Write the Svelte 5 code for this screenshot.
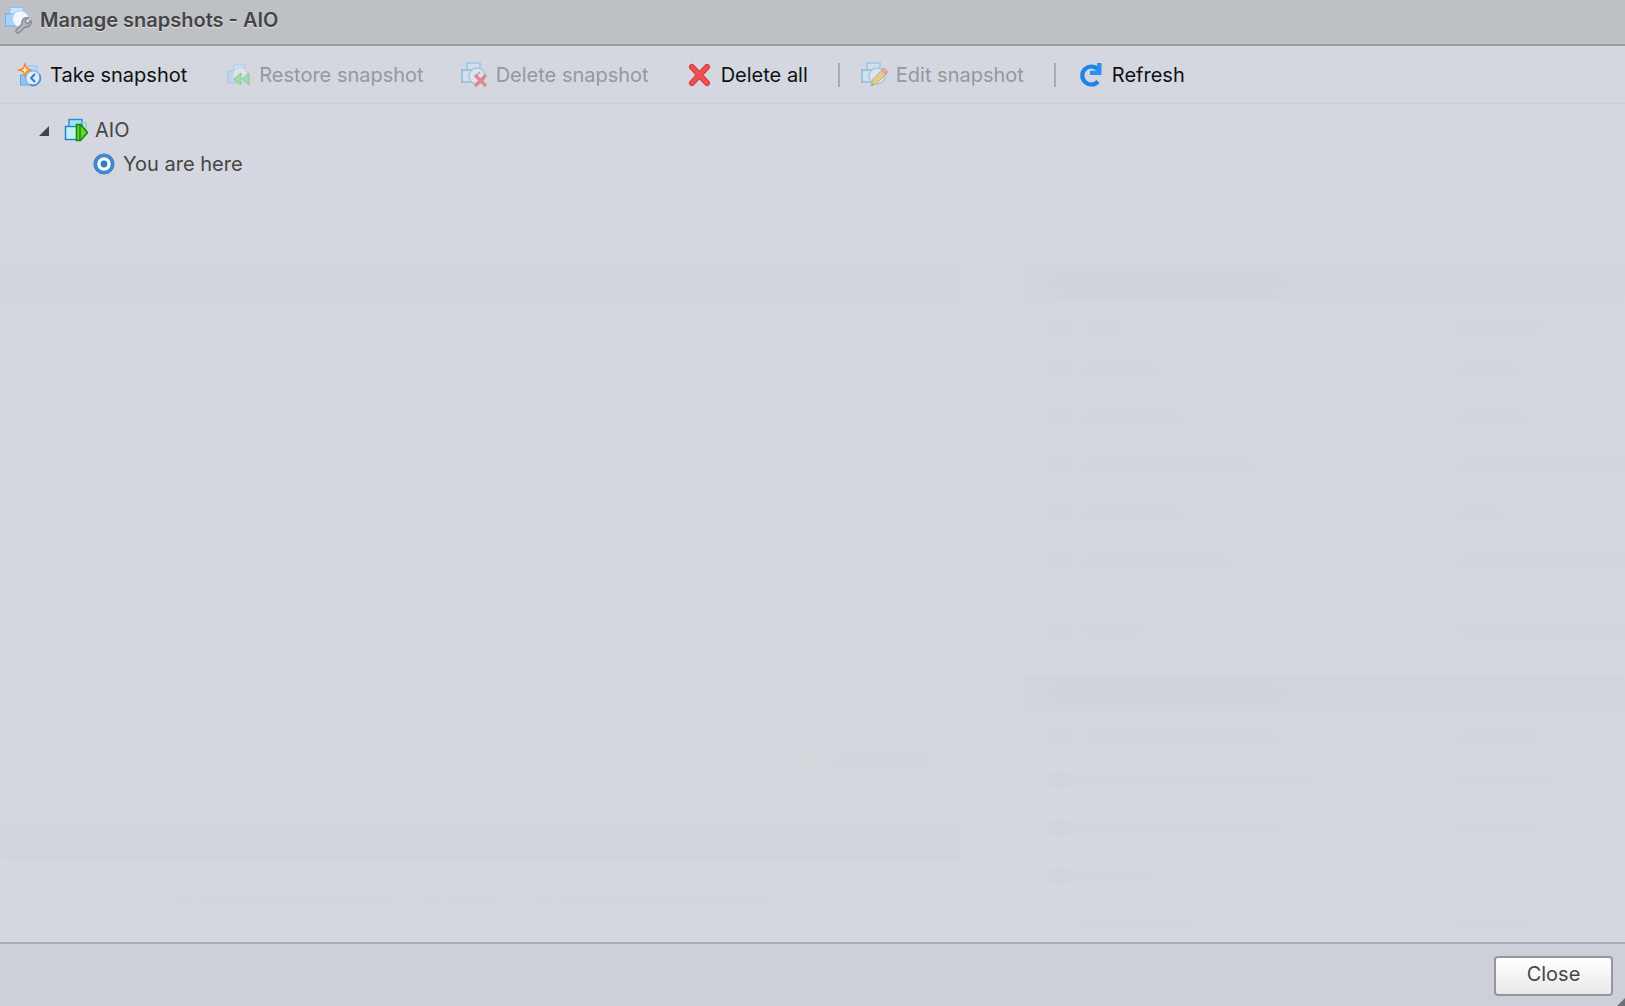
<script lang="ts">
	type Icon = 'take' | 'restore' | 'delete' | 'delete-all' | 'edit' | 'refresh'
	type Action = { icon: Icon; label: string; disabled?: boolean; separated?: boolean }
	type Row = { gap?: boolean; icon: boolean; label: number; value: number }

	const actions: Action[] = [
		{ icon: 'take', label: 'Take snapshot' },
		{ icon: 'restore', label: 'Restore snapshot', disabled: true },
		{ icon: 'delete', label: 'Delete snapshot', disabled: true },
		{ icon: 'delete-all', label: 'Delete all' },
		{ icon: 'edit', label: 'Edit snapshot', disabled: true, separated: true },
		{ icon: 'refresh', label: 'Refresh', separated: true }
	]

	// widths of the faded lines in the page behind the dialog
	const hardware: Row[] = [
		{ icon: true, label: 42, value: 92 },
		{ icon: true, label: 80, value: 72 },
		{ icon: true, label: 104, value: 80 },
		{ icon: true, label: 176, value: 180 },
		{ icon: true, label: 106, value: 54 },
		{ icon: true, label: 152, value: 180, gap: true },
		{ icon: true, label: 66, value: 180 }
	]
	const performance: Row[] = [
		{ icon: true, label: 200, value: 88 },
		{ icon: true, label: 236, value: 102 },
		{ icon: true, label: 204, value: 84 },
		{ icon: true, label: 72, value: 0 },
		{ icon: false, label: 114, value: 80 }
	]
	const legend = [190, 56, 216]

	let expanded = $state(true)
</script>

{#snippet machine()}
	<rect x="7" y="2" width="13" height="11" fill="#cfeafc" stroke="#62b9ee" stroke-width="1.6" />
	<rect x="2" y="9" width="9" height="12" fill="#cde9fb" stroke="#48a8e8" stroke-width="1.6" />
	<circle cx="17" cy="15" r="8" fill="#e3effb" stroke="#7fb2e0" stroke-width="1.4" />
{/snippet}

{#snippet glyph(name: Icon)}
	<svg class="icon" viewBox="0 0 28 28" aria-hidden="true">
		{#if name === 'take'}
			<rect x="14" y="5" width="9" height="9" fill="#b9dcfa" stroke="#8fc3f3" />
			<rect x="6.5" y="14" width="8" height="10" fill="#8cc5f8" stroke="#5fa9ee" />
			<circle cx="19" cy="17" r="7.3" fill="#dcecfb" stroke="#8ab8e8" stroke-width="1.5" />
			<path d="M25.4 13.5A7.3 7.3 0 0 1 16 23.7" fill="none" stroke="#4a86cc" stroke-width="1.5" />
			<path d="M21 13l-4 4 4 4" fill="none" stroke="#3277c5" stroke-width="1.8" />
			<path d="M11 3l1.6 4.4L17 9l-4.4 1.6L11 15l-1.6-4.4L5 9l4.4-1.6z" fill="#fff0c4" stroke="#f58a24" stroke-width="1.5" />
		{:else if name === 'restore'}
			<rect x="11" y="4" width="11" height="10" fill="#d4e8fb" stroke="#86bdf3" />
			<rect x="5" y="10" width="8" height="12" fill="#b5d5f8" stroke="#78b1ef" />
			<circle cx="17" cy="14" r="7.5" fill="#e4effa" stroke="#a7c7e6" />
			<path d="M18 12v12l-7-6zM26 12v12l-7-6z" fill="#75df7c" stroke="#3fbc4c" />
		{:else if name === 'delete'}
			{@render machine()}
			<path d="M16 15l4-4" stroke="#5384b3" stroke-width="1.5" />
			<path d="M15 14l11 11M26 14l-11 11" stroke="#ef3b3b" stroke-width="3.2" />
		{:else if name === 'delete-all'}
			<path d="M7 6l15 16M22 6l-15 16" stroke="#d93636" stroke-width="6" stroke-linecap="round" />
			<path d="M7 6l15 16M22 6l-15 16" stroke="#ed5151" stroke-width="4" stroke-linecap="round" />
		{:else if name === 'edit'}
			{@render machine()}
			<path d="M11 25l2-7 9-9 4 4-9 9z" fill="#f2c435" stroke="#bd8f24" />
			<path d="M22 9l2-1 3 3-1 2z" fill="#fff" stroke="#ef4545" stroke-width="1.5" />
			<path d="M11 25l1-3 2 2z" fill="#69665d" />
		{:else}
			<path d="M22 8.5A9 9 0 1 0 22 20.5" fill="none" stroke="#1f83e6" stroke-width="4.2" />
			<path d="M21 2h4.5v12H14V9.8h7z" fill="#2790f4" />
		{/if}
	</svg>
{/snippet}

{#snippet table(rows: Row[])}
	<div class="backdrop__title"><i class="smudge" style:width="236px"></i></div>
	<div class="backdrop__rows">
		{#each rows as row}
			<div class="backdrop__row" class:backdrop__row--tall={row.gap}>
				<div class="backdrop__name">
					<i class="smudge smudge--icon" class:smudge--none={!row.icon}></i>
					<i class="smudge" style:width="{row.label}px"></i>
				</div>
				<i class="smudge" style:width="{row.value}px"></i>
			</div>
		{/each}
	</div>
{/snippet}

<section class="dialog" aria-labelledby="dialog-title">
	<header class="dialog__header">
		<svg class="icon" viewBox="0 0 28 28" aria-hidden="true">
			<rect x="6" y="1.5" width="13" height="12" fill="#c8e4fd" stroke="#8dc2f4" />
			<rect x="1.5" y="8" width="10" height="12" fill="#a4d2fc" stroke="#6fb0f0" />
			<circle cx="16.5" cy="13" r="8.3" fill="#eef6fe" stroke="#a9cbed" />
			<path d="M14 25l7-7" stroke="#85888c" stroke-width="5.4" stroke-linecap="round" />
			<path d="M18 19c-1-5 2-8 6-7l-3 3 2 3 4-3c1 4-3 7-7 6z" fill="#b4b6b9" stroke="#85888c" stroke-width="1.4" />
			<path d="M14 25l7-7" stroke="#b4b6b9" stroke-width="3" stroke-linecap="round" />
		</svg>
		<h1 class="dialog__title" id="dialog-title">Manage snapshots - AIO</h1>
	</header>

	<div class="toolbar" role="toolbar" aria-label="Snapshot actions">
		{#each actions as action (action.icon)}
			{#if action.separated}
				<span class="toolbar__separator"></span>
			{/if}
			<button class="toolbar__button" type="button" disabled={action.disabled}>
				{@render glyph(action.icon)}
				{action.label}
			</button>
		{/each}
	</div>

	<main class="dialog__body">
		<div class="backdrop" aria-hidden="true">
			<div class="backdrop__column backdrop__column--main">
				<div class="backdrop__title"></div>
				<div class="backdrop__notes">
					<i class="smudge smudge--pencil"></i>
					<i class="smudge" style:width="104px"></i>
				</div>
				<div class="backdrop__title backdrop__title--spaced"></div>
				<div class="backdrop__legend">
					{#each legend as width, i}
						<span class="backdrop__entry">
							<i class="smudge smudge--dot" class:smudge--warm={i === 0}></i>
							<i class="smudge" style:width="{width}px"></i>
						</span>
					{/each}
				</div>
			</div>
			<div class="backdrop__column">
				{@render table(hardware)}
				{@render table(performance)}
			</div>
		</div>

		<ul class="tree">
			<li>
				<div class="tree__row">
					<button
						class="tree__toggle"
						type="button"
						aria-label="Toggle AIO"
						aria-expanded={expanded}
						onclick={() => (expanded = !expanded)}
					>
						<svg class:collapsed={!expanded} viewBox="0 0 12 12" aria-hidden="true">
							<path d="M11 1v10H1z" fill="#454545" />
						</svg>
					</button>
					<svg class="tree__icon" viewBox="0 0 24 24" aria-hidden="true">
						<rect x="5" y="1.5" width="13" height="12" fill="#9ee5ed" stroke="#278fe0" stroke-width="1.4" />
						<path d="M18 5h4v7" fill="none" stroke="#7de3a5" stroke-width="1.5" />
						<rect x="1.5" y="8.5" width="12" height="13" fill="#c4f1f5" stroke="#237bd2" stroke-width="1.4" />
						<path d="M12.5 6.5h4l7 8-7 8h-4z" fill="#66d51f" stroke="#158b19" stroke-width="1.6" />
						<path d="M16 7v15" stroke="#158b19" stroke-width="1.5" />
					</svg>
					<span>AIO</span>
				</div>
				{#if expanded}
					<ul class="tree__children">
						<li class="tree__row">
							<svg class="tree__icon" viewBox="0 0 24 24" aria-hidden="true">
								<circle cx="12" cy="12" r="8.7" fill="#f5f9fd" stroke="#4588c9" stroke-width="3.8" />
								<circle cx="12" cy="12" r="3.4" fill="#347dc3" />
							</svg>
							<span>You are here</span>
						</li>
					</ul>
				{/if}
			</li>
		</ul>
	</main>

	<footer class="dialog__footer">
		<button class="close" type="button">Close</button>
		<svg class="dialog__grip" viewBox="0 0 10 10" aria-hidden="true">
			<path d="M10 0v10H0z" fill="#6e7074" />
		</svg>
	</footer>
</section>

<style>
	.dialog {
		display: flex;
		flex-direction: column;
		min-height: 100vh;
		background: #d4d7df;
		color: #454545;
		font-family: Inter, 'Open Sans', sans-serif;
		font-size: 20px;
		line-height: 24px;
	}

	.icon {
		width: 28px;
		height: 28px;
		flex-shrink: 0;
	}

	.dialog__header {
		display: flex;
		align-items: center;
		gap: 8px;
		box-sizing: border-box;
		height: 46px;
		padding: 0 4px 4px;
		border-bottom: 2px solid #999ca2;
		background: linear-gradient(#bdc1c5, #bec0c4);
	}

	.dialog__title {
		margin: 0;
		font-size: 20px;
		font-weight: 600;
		line-height: 24px;
		color: #454545;
		text-shadow: 0 1px 1px #e4e6e9;
	}

	.toolbar {
		display: flex;
		flex-wrap: wrap;
		align-items: center;
		min-height: 57px;
		border-bottom: 1px solid #cfcfd3;
	}

	.toolbar__button {
		display: flex;
		align-items: center;
		gap: 8px;
		padding: 0 22px 0 14px;
		border: 0;
		background: none;
		color: #111;
		font: inherit;
		cursor: pointer;
	}

	.toolbar__button:disabled {
		color: #96989d;
		cursor: default;
	}

	.toolbar__button:disabled .icon {
		opacity: 0.5;
	}

	.toolbar__separator {
		width: 2px;
		height: 24px;
		margin: 0 6px 0 8px;
		background: #a9abb0;
	}

	.dialog__body {
		position: relative;
		flex: 1;
	}

	.tree,
	.tree__children {
		margin: 0;
		padding: 0;
		list-style: none;
	}

	.tree {
		position: relative;
		padding: 9px 36px;
	}

	.tree__children {
		padding-left: 56px;
	}

	.tree__row {
		display: flex;
		align-items: center;
		gap: 7px;
		height: 34px;
	}

	.tree__icon {
		width: 24px;
		height: 24px;
	}

	.tree__toggle {
		display: flex;
		width: 14px;
		margin-right: 7px;
		padding: 2px 0 0 2px;
		border: 0;
		background: none;
	}

	.tree__toggle svg {
		width: 12px;
		height: 12px;
	}

	.tree__toggle .collapsed {
		transform: rotate(-45deg);
	}

	.dialog__footer {
		position: relative;
		display: flex;
		align-items: center;
		justify-content: flex-end;
		box-sizing: border-box;
		height: 64px;
		padding: 2px 12px 0;
		border-top: 2px solid #aaadb4;
		background: #cdd0d8;
	}

	.dialog__grip {
		position: absolute;
		right: 0;
		bottom: 0;
		width: 8px;
		height: 8px;
	}

	.close {
		width: 119px;
		height: 40px;
		padding: 0 0 4px;
		border: 2px solid #96979a;
		border-radius: 4px;
		background: linear-gradient(#fff, #e9e9e9);
		color: #454545;
		font: inherit;
		cursor: pointer;
	}

	/* dimmed page showing through the dialog */
	.backdrop {
		position: absolute;
		inset: 0;
		display: flex;
		gap: 38px;
		padding-top: 160px;
		overflow: hidden;
		pointer-events: none;
	}

	.backdrop__column {
		flex: 12;
		min-width: 0;
	}

	.backdrop__column--main {
		flex: 19;
	}

	.backdrop__title {
		display: flex;
		align-items: center;
		box-sizing: border-box;
		height: 38px;
		margin: 0 12px 6px 0;
		padding-left: 26px;
		background: #d2d5dd;
		filter: blur(1px);
	}

	.backdrop__column:last-child .backdrop__title {
		margin: 0 0 6px 12px;
	}

	.backdrop__title--spaced {
		margin-top: 24px;
	}

	.backdrop__notes {
		display: flex;
		align-items: flex-end;
		justify-content: flex-end;
		gap: 8px;
		box-sizing: border-box;
		height: 490px;
		padding: 0 38px 30px;
		background: #d5d8e0;
	}

	.backdrop__legend {
		display: flex;
		justify-content: center;
		gap: 30px;
		height: 120px;
		padding: 26px 24px 0 0;
		background: #d5d8e0;
	}

	.backdrop__entry {
		display: flex;
		gap: 6px;
	}

	.backdrop__rows {
		padding-bottom: 20px;
		background: #d5d8e0;
	}

	.backdrop__row {
		display: flex;
		align-items: center;
		height: 48px;
	}

	.backdrop__row:first-child {
		height: 38px;
	}

	.backdrop__row--tall {
		margin-bottom: 20px;
	}

	.backdrop__name {
		display: flex;
		flex-shrink: 0;
		align-items: center;
		gap: 6px;
		width: 406px;
		padding-left: 36px;
	}

	.smudge {
		height: 16px;
		flex-shrink: 0;
		border-radius: 8px;
		background: #d2d5dd;
		filter: blur(3px);
	}

	.backdrop__title .smudge {
		background: #d0d3db;
	}

	.smudge--icon {
		width: 28px;
		background: #d1d4dc;
	}

	.smudge--none {
		background: none;
	}

	.smudge--pencil {
		width: 18px;
		background: #d5d7da;
	}

	.smudge--dot {
		width: 18px;
		background: #d0d5de;
	}

	.smudge--warm {
		background: #d2d5d9;
	}
</style>
